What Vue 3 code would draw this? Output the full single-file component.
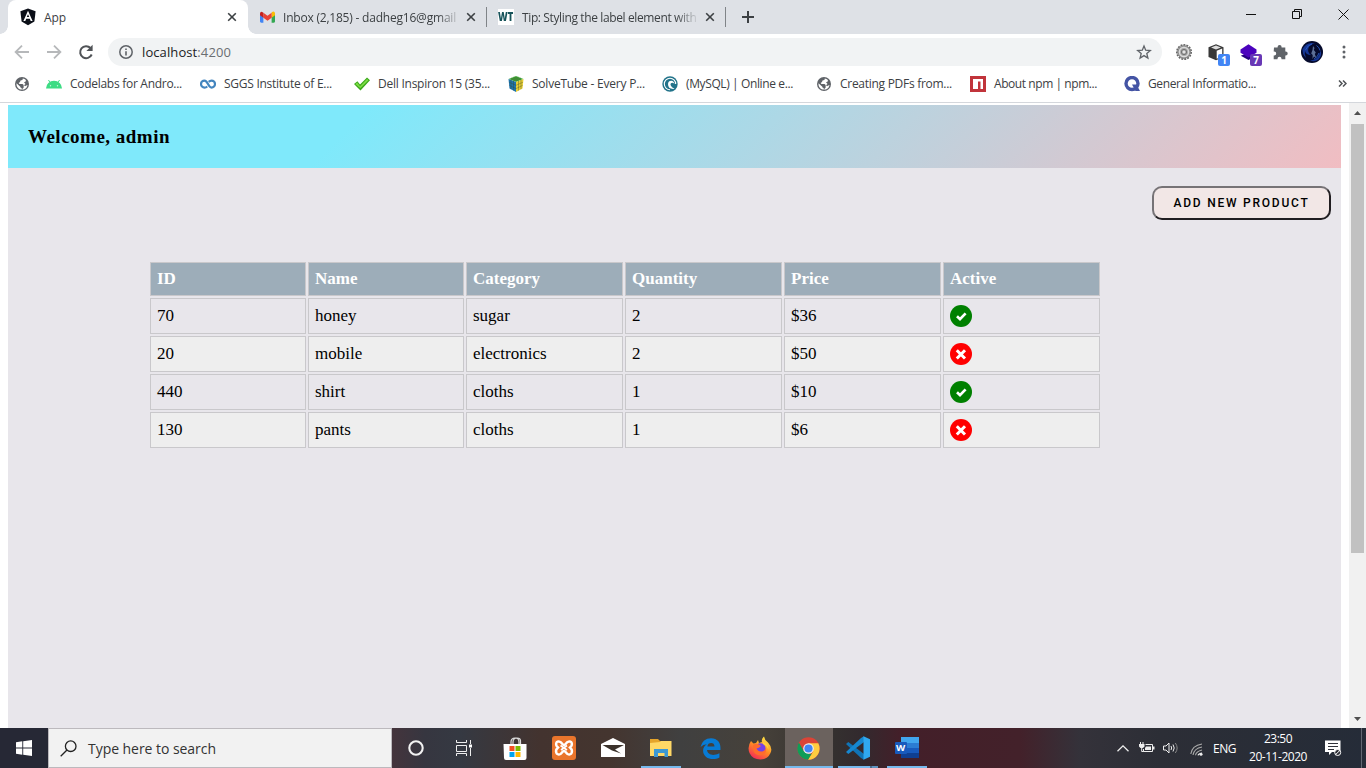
<script setup>
import { nextTick } from 'vue'

// Spreads a label's letters so that it occupies the given width in pixels.
const vFit = {
  mounted(el, { value }) {
    nextTick(() => {
      const natural = el.getBoundingClientRect().width
      el.style.letterSpacing = (value - natural) / el.textContent.length + 'px'
    })
  },
}

const bookmarks = [
  { icon: 'android', label: 'Codelabs for Andro...', width: 112 },
  { icon: 'loop', label: 'SGGS Institute of E...', width: 108 },
  { icon: 'check', label: 'Dell Inspiron 15 (35...', width: 112 },
  { icon: 'cube', label: 'SolveTube - Every P...', width: 113 },
  { icon: 'swirl', label: '(MySQL) | Online e...', width: 107 },
  { icon: 'globe', label: 'Creating PDFs from...', width: 112 },
  { icon: 'npm', label: 'About npm | npm...', width: 103 },
  { icon: 'q', label: 'General Informatio...', width: 108 },
]

const columns = ['ID', 'Name', 'Category', 'Quantity', 'Price', 'Active']
const products = [
  { id: 70, name: 'honey', category: 'sugar', quantity: 2, price: '$36', active: true },
  { id: 20, name: 'mobile', category: 'electronics', quantity: 2, price: '$50', active: false },
  { id: 440, name: 'shirt', category: 'cloths', quantity: 1, price: '$10', active: true },
  { id: 130, name: 'pants', category: 'cloths', quantity: 1, price: '$6', active: false },
]
</script>

<template>
  <div class="screen">
    <div class="tabs">
      <div class="tab active">
        <svg class="fav" viewBox="0 0 16 18" width="16" height="18"><path d="M8 .6 15.6 3.2 14.4 13.6 8 17.2 1.6 13.6 .4 3.2Z" fill="#0b0f18" /><path d="M8 2.8 12.6 13H10.7L9.8 10.7H6.2L5.3 13H3.4ZM8 6.2 6.8 9.1H9.2Z" fill="#fff" fill-rule="evenodd" /></svg>
        <span class="tab-title"><span v-fit="22">App</span></span>
        <svg class="x" viewBox="0 0 10 10" width="10" height="10"><path d="M1.2 1.2 8.8 8.8M8.8 1.2 1.2 8.8" /></svg>
      </div>
      <div class="tab second">
        <svg class="fav" viewBox="0 0 16 12" width="15" height="12"><path d="M0 2v8.8Q0 12 1.2 12h2.4V5Z" fill="#4285f4" /><path d="M16 2v8.8Q16 12 14.8 12h-2.4V5Z" fill="#34a853" /><path d="M12.4 2v4.7L16 4V2Q15.5-1 12.4 1Z" fill="#fbbc04" /><path d="M3.6 1.4 8 4.7l4.4-3.3v5.3L8 10 3.6 6.7Z" fill="#ea4335" /><path d="M0 2Q.5-1 3.6 1.4v5.3L0 4Z" fill="#c5221f" /></svg>
        <span class="tab-title fade"><span v-fit="173">Inbox (2,185) - dadheg16@gmail</span></span>
        <svg class="x" viewBox="0 0 10 10" width="10" height="10"><path d="M1.2 1.2 8.8 8.8M8.8 1.2 1.2 8.8" /></svg>
      </div>
      <div class="tab third">
        <span class="fav wt"><span>WT</span></span>
        <span class="tab-title fade"><span v-fit="174.500">Tip: Styling the label element with</span></span>
        <svg class="x" viewBox="0 0 10 10" width="10" height="10"><path d="M1.2 1.2 8.8 8.8M8.8 1.2 1.2 8.8" /></svg>
      </div>
      <svg class="plus" viewBox="0 0 12 12" width="12" height="12"><path d="M6 0V12M0 6H12" stroke="#3c4043" stroke-width="2" /></svg>
      <div class="window-buttons">
        <svg viewBox="0 0 10 10" width="10" height="10"><path d="M0 5.5H10" /></svg>
        <svg viewBox="0 0 10 10" width="10" height="10"><path d="M.5 2.5h7v7h-7zM2.5 2.5v-2h7v7h-2" /></svg>
        <svg viewBox="0 0 11 11" width="11" height="11"><path d="M.5 .5l10 10M10.500 .5l-10 10" /></svg>
      </div>
    </div>

    <div class="toolbar">
      <svg class="nav" viewBox="0 0 16 16" width="16" height="16"><path d="M15 8H2M8 1.600 1.600 8 8 14.400" stroke="#b6b8ba" /></svg>
      <svg class="nav" viewBox="0 0 16 16" width="16" height="16"><path d="M1 8h13M8 1.600 14.400 8 8 14.400" stroke="#b6b8ba" /></svg>
      <svg class="nav" viewBox="0 0 16 16" width="16" height="16"><path d="M13.700 10.500A6 6 0 1 1 12.500 4" stroke="#505357" stroke-width="2" /><path d="M14.600 .8V7H8.400Z" fill="#505357" /></svg>
      <div class="address">
        <svg viewBox="0 0 14 14" width="14" height="14"><circle cx="7" cy="7" r="6.200" fill="none" stroke="#5f6368" stroke-width="1.500" /><path d="M7 6.200v4.300M7 3.400v1.600" stroke="#5f6368" stroke-width="1.600" /></svg>
        <span class="url" v-fit="89"><b>localhost</b>:4200</span>
        <svg class="star" viewBox="0 0 16 16" width="16" height="16"><path d="M8 1.900 9.700 6.200 14.300 6.500 10.800 9.500 11.900 14 8 11.600 4.100 14 5.200 9.500 1.700 6.500 6.300 6.200Z" fill="none" stroke="#5f6368" stroke-width="1.300" /></svg>
      </div>
      <div class="extensions">
        <svg viewBox="0 0 16 16" width="16" height="16"><circle cx="8" cy="8" r="7.200" fill="none" stroke="#666" stroke-width="1.600" stroke-dasharray="1.900 1.115" /><circle cx="8" cy="8" r="6.300" fill="#aaa" stroke="#6f6f6f" stroke-width=".9" /><circle cx="8" cy="8" r="4.600" fill="none" stroke="#ddd" stroke-width="1.300" /><circle cx="8" cy="8" r="2.600" fill="#b9b9b9" stroke="#707070" /><circle cx="8" cy="8" r="1.100" fill="#eee" /></svg>
        <div class="ext">
          <svg viewBox="0 0 16 17" width="16" height="17"><path d="M8 .3 15.500 3.300V13L8 16.300 .5 13V3.300Z" fill="#383838" /><path d="M8 1.500 13 3.500 8 5.600 3 3.500Z" fill="#ddd" /><path d="M8.700 6.800 14.200 4.600V12.400L8.700 14.800Z" fill="#fff" /></svg>
          <span class="badge blue">1</span>
        </div>
        <div class="ext">
          <svg viewBox="0 0 17 17" width="17" height="17"><path d="M8.500 8.500 16 11.800 8.500 16 .8 11.800Z" fill="#260080" /><path d="M8.500 .2 16.500 5.500v3.200L8.500 13.500.5 8.700V5.500Z" fill="#4b02bd" /></svg>
          <span class="badge purple">7</span>
        </div>
        <svg viewBox="0 0 16 16" width="16" height="16"><path d="M2 3.500h3.600V3a2 2 0 0 1 4 0v.5h3.700v4h.4a2 2 0 0 1 0 4h-.4v3.700H9.500v-.4a2 2 0 0 0-4 0v.4H1.700v-3.800h.5a2 2 0 0 0 0-4h-.5Z" fill="#5f6368" /></svg>
        <svg viewBox="0 0 22 22" width="22" height="22"><circle cx="11" cy="11" r="11" fill="#050a2c" /><path d="M1.500 8Q6 0 14 2.500 9 3 7.500 7T10 14Q5 14 4 10 3 13 5 17 1 13 1.500 8ZM9 19.500q6-.5 8-4 2-3 2.500-6 2 5-2 9-4 3-8.500 1" fill="#153694" /><path d="M4.500 9q2-5 6.500-6M13 18q4-2 5-6M15.500 4.500q3 2 3.500 5" fill="none" stroke="#2b5cc4" stroke-width=".9" /><path d="M12 5l1.500 2-.7 2 2 2.500-1 1.500 1.500 4-2.300-1.500L11.500 18l.2-4-1.500-1.500L11.500 9Z" fill="#5c7096" /></svg>
        <svg viewBox="0 0 4 14" width="4" height="14" fill="#5f6368"><circle cx="2" cy="2" r="1.500" /><circle cx="2" cy="7" r="1.500" /><circle cx="2" cy="12" r="1.500" /></svg>
      </div>
    </div>

    <div class="bookmarks">
      <svg class="apps" viewBox="1 1 14 14" width="14" height="14"><circle cx="8" cy="8" r="7" fill="#5f6368" /><path d="M8.800 2.400Q8.800 4.200 7.400 4.300 6.200 4.300 6.200 5.600 6.200 6.500 4.800 6.700 4.600 7.900 6 7.900H8.500Q9.500 8 9.500 9.300 10.800 9.400 11 10.300 12.500 9 13.600 9.300 12.900 12.500 10 13.400 8.500 13.700 7.700 13.500V12Q6.400 12 6.300 10.700L2.500 7.300Q2.200 11 5 13L7.500 13.700 9.600 11.700 9.700 9.500 11.500 8 10 6.300 11.700 5.600 11.900 3.900Q10.600 2.500 8.800 2.400Z" fill="#fff" fill-rule="evenodd" /></svg>
      <div v-for="mark in bookmarks" :key="mark.label" class="bookmark">
        <svg viewBox="0 0 16 16" width="16" height="16">
          <g v-if="mark.icon === 'android'"><path d="M0 12.500a8 7.700 0 0 1 16 0Z" fill="#3ddc84" /><path d="M4 6.500 2.500 4M12 6.500 13.500 4" stroke="#3ddc84" /><circle cx="4.500" cy="9.800" r=".7" fill="#c9f6dd" /><circle cx="11.500" cy="9.800" r=".7" fill="#c9f6dd" /></g>
          <g v-else-if="mark.icon === 'loop'" fill="none" stroke="#4385be" stroke-width="2.200"><path d="M7.300 10.500Q6 11.600 4.500 11.600a3.500 3.500 0 0 1 0-7C8 4.600 8 11.600 11.500 11.600a3.500 3.500 0 0 0 0-7Q10 4.600 8.700 5.900" /></g>
          <g v-else-if="mark.icon === 'check'"><path d="M0 8 3.400 5.200 6 8.500 13 1.500 16 4.300 6.500 14.500Z" fill="#3aa81a" /><path d="M1.300 8 3.200 6.500 6 10.200 13 3 14.500 4.300 6.400 12.300Z" fill="#7cdc44" /></g>
          <g v-else-if="mark.icon === 'cube'"><path d="M8 0 15.500 3 8 6 .5 3Z" fill="#47b03f" /><path d="M.5 3 8 6V16L1.500 12.400Z" fill="#1f74ad" /><path d="M15.500 3 8 6V16L14.500 12.400Z" fill="#e9cf35" /><path d="M3 4v9.200M5.500 5v9.600M1 6.200 8 9.300M1.200 9.300 8 12.600M10.500 5v9.600M13 4v9.200M15 6.200 8 9.300M14.700 9.300 8 12.600M3 2 10.500 5M5.500 1 13 4M13 2 5.500 5M10.500 1 3 4" stroke="#344622" stroke-width=".35" /></g>
          <g v-else-if="mark.icon === 'swirl'"><circle cx="8" cy="8" r="7.700" fill="#22738a" /><path d="M8 13.700A5.700 5.700 0 1 1 13.700 8" fill="none" stroke="#fff" stroke-width="1.100" /><path d="M12.500 12.800Q6 13.500 6 8 6.300 4.800 9.300 4.800 12 5 12.500 8 10.500 6 8.700 7.500 7.500 10 12.500 12.800Z" fill="#fff" /></g>
          <g v-else-if="mark.icon === 'globe'"><circle cx="8" cy="8" r="7" fill="#5f6368" /><path d="M8.800 2.400Q8.800 4.200 7.400 4.300 6.200 4.300 6.200 5.600 6.200 6.500 4.800 6.700 4.600 7.900 6 7.900H8.500Q9.500 8 9.500 9.300 10.800 9.400 11 10.300 12.500 9 13.600 9.300 12.900 12.500 10 13.400 8.500 13.700 7.700 13.500V12Q6.400 12 6.300 10.700L2.500 7.300Q2.200 11 5 13L7.500 13.700 9.600 11.700 9.700 9.500 11.500 8 10 6.300 11.700 5.600 11.900 3.900Q10.600 2.500 8.800 2.400Z" fill="#fff" fill-rule="evenodd" /></g>
          <g v-else-if="mark.icon === 'npm'"><path d="M0 0h16v16H0Z" fill="#c1343b" /><path d="M3 3h10v10h-2.500V5.500H8V13H3Z" fill="#fff" /></g>
          <g v-else><circle cx="8" cy="7.500" r="6" fill="none" stroke="#4454a4" stroke-width="3.400" /><path d="M8 8.500h4.500L16 15h-4.500Z" fill="#4454a4" /></g>
        </svg>
        <span v-fit="mark.width">{{ mark.label }}</span>
      </div>
      <svg class="more" viewBox="0 0 9 7" width="9" height="7"><path d="M1 .5l3 3-3 3M5 .5l3 3-3 3" fill="none" stroke="#505357" stroke-width="1.500" /></svg>
    </div>

    <div class="viewport">
      <main class="page">
        <header class="welcome"><span v-fit="142">Welcome, admin</span></header>
        <div class="actions"><button class="add"><span v-fit="136">ADD NEW PRODUCT</span></button></div>
        <table class="products">
          <colgroup>
            <col class="narrow"><col class="narrow"><col><col><col><col>
          </colgroup>
          <thead>
            <tr><th v-for="name in columns" :key="name">{{ name }}</th></tr>
          </thead>
          <tbody>
            <tr v-for="item in products" :key="item.id">
              <td>{{ item.id }}</td>
              <td>{{ item.name }}</td>
              <td>{{ item.category }}</td>
              <td>{{ item.quantity }}</td>
              <td>{{ item.price }}</td>
              <td>
                <svg class="status" viewBox="0 0 22 22" width="22" height="22">
                  <circle cx="11" cy="11" r="11" :fill="item.active ? 'green' : 'red'" />
                  <path v-if="item.active" d="M7 11.300 10 14.200 15.600 8.400" fill="none" stroke="#fff" stroke-width="2.700" />
                  <path v-else d="M6.800 7.300 15 15.500M15 7.300 6.800 15.500" fill="none" stroke="#fff" stroke-width="3" />
                </svg>
              </td>
            </tr>
          </tbody>
        </table>
      </main>
      <div class="scrollbar">
        <svg viewBox="0 0 7 4" width="7" height="4"><path d="M0 4 3.500 0 7 4Z" fill="#505050" /></svg>
        <div class="thumb"></div>
        <svg class="down" viewBox="0 0 7 4" width="7" height="4"><path d="M0 0 3.500 4 7 0Z" fill="#505050" /></svg>
      </div>
    </div>

    <div class="taskbar">
      <div class="start">
        <svg viewBox="0 0 16 16" width="16" height="16"><path d="M0 2.200 6.300 1.300V7.500H0ZM7.200 1.200 16 0V7.500H7.200ZM0 8.500H6.300V14.700L0 13.800ZM7.200 8.500H16V16L7.200 14.800Z" fill="#fff" /></svg>
      </div>
      <div class="search">
        <svg viewBox="0 0 17 17" width="17" height="17"><circle cx="10.700" cy="6.200" r="5.300" fill="none" stroke="#222" stroke-width="1.300" /><path d="M7 10 .7 16.300" stroke="#222" stroke-width="1.300" /></svg>
        <span v-fit="128">Type here to search</span>
      </div>
      <div class="apps-row">
        <div class="app"><svg viewBox="0 0 16 16" width="16" height="16"><circle cx="8" cy="8" r="6.700" fill="none" stroke="#f2f2f2" stroke-width="2.100" /></svg></div>
        <div class="app task-view"><svg viewBox="0 0 16 16" width="16" height="16"><path d="M.5 0V2.500H10.500V0M.5 5.500H10.500V11.500H.5ZM.5 16V13.500H10.500V16M14.500 0V4M14.500 8V16" fill="none" stroke="#eee" /><path d="M13 4.500h3v3h-3Z" fill="#fff" /></svg></div>
        <div class="app store"><svg viewBox="0 0 24 24" width="24" height="24"><path d="M8 8V5Q8 1 12 1T16 5V8M10 7V5Q10 1 14 1T17.500 5V7" fill="none" stroke="#ddd" stroke-width="1.200" /><path d="M.5 7H23.500V21Q23.500 23 21.500 23H3Q1 23 1 21Z" fill="#fff" /><path d="M6.500 9h5v5h-5Z" fill="#f25022" /><path d="M12.500 9h5v5h-5Z" fill="#7fba00" /><path d="M6.500 15h5v5h-5Z" fill="#00a4ef" /><path d="M12.500 15h5v5h-5Z" fill="#ffb900" /></svg></div>
        <div class="app shifted"><svg viewBox="0 0 24 24" width="24" height="24"><rect width="24" height="24" rx="3" fill="#e9752c" /><path d="M8.500 6C3.500 4 3 9 6 11.500 2.500 14.500 4 20 8.500 18 10 17 10.500 15 12 15S14 17 15.500 18C20 20 21.500 14.500 18 11.500 21 9 20.500 4 15.500 6 14 7 13.500 9 12 9S10 7 8.500 6Z" fill="none" stroke="#fff" stroke-width="2.400" /><path d="M8.500 9.500 15 14M15 9.500 9 14" stroke="#fff" stroke-width="1.700" /></svg></div>
        <div class="app shifted"><svg viewBox="0 0 24 20" width="24" height="20"><path d="M0 6 12 0 24 6V19H0Z" fill="#fff" /><path d="M1.500 7H23L14 11.500 20 15.500 11 12.500Z" fill="#3b322b" /></svg></div>
        <div class="app open"><svg viewBox="0 0 22 20" width="22" height="20"><path d="M0 1H8L10 3H21V6H0Z" fill="#e5a52b" /><path d="M0 5 10 4 11 3H21.500V18H0Z" fill="#ffd866" /><path d="M4 11H18V19H14.500V15H8V19H4Z" fill="#3c98d3" /></svg></div>
        <div class="app"><svg viewBox="0 0 20 20" width="21" height="21"><path d="M.5 8.500Q2.500 .5 10.500 .3C16.500 .3 19.500 4.500 19.500 9V11.500H6.700C7 15 10.500 16.500 14 16Q16.500 15.700 18.500 14.600V18.500C15 20.500 9 20.500 5.800 18 1.500 14.500 2.300 8.500 6.500 6Q3 6 .5 8.500ZM7 8H13.800Q13.600 4.700 10.700 4.700 7.500 4.700 7 8Z" fill="#087bd5" fill-rule="evenodd" /></svg></div>
        <div class="app"><svg viewBox="0 0 24 24" width="24" height="24"><defs><linearGradient id="fox" x1=".8" y1="0" x2=".2" y2="1"><stop offset="0" stop-color="#fff04a" /><stop offset=".5" stop-color="#ff8a24" /><stop offset="1" stop-color="#f3225b" /></linearGradient></defs><path d="M3 5 5.500 7.500 8 7 10 4 11 7 14 6Q13 3 16 .5 16.500 4 20 6.500 25 12 22.500 17 19.500 23.500 12.500 23.500 4.500 23.500 1.500 17-1 10.500 3 5Z" fill="url(#fox)" /><circle cx="12.500" cy="12.300" r="5" fill="#7542e5" /><path d="M5 9Q8 7 11 8.500L13 10Q11 12 8.500 12.500 10 16 14 15.500 17 15 17.500 12 19.500 18 13 19.300 6 19.500 5 13Z" fill="#ff6c2c" /><path d="M15 6Q21 8 20.500 14 19 9.500 15 8Z" fill="#ffd43a" /></svg></div>
        <div class="app chrome open"><svg viewBox="0 0 24 24" width="23" height="23"><circle cx="12" cy="12" r="11.700" fill="#db4437" /><path d="M12 6.500H22.200A11.700 11.700 0 0 1 11.500 23.700L17 14.800Z" fill="#ffcd40" /><path d="M2 5.800 7 14.500 12 17.500H15.200L11.500 23.700A11.700 11.700 0 0 1 2 5.800Z" fill="#0f9d58" /><circle cx="12" cy="12" r="5.500" fill="#f1f1f1" /><circle cx="12" cy="12" r="4.300" fill="#4285f4" /></svg></div>
        <div class="app open code"><svg viewBox="0 0 24 24" width="24" height="24"><path d="M0 8 2.300 6 18 18V23.800L15 22Z" fill="#1074b6" /><path d="M0 16 2.300 18 18 6V.3L15 2Z" fill="#1687cf" /><path d="M17.500 .2 24 3.200V20.800L17.500 23.800Z" fill="#30a8ef" /></svg></div>
        <div class="app open"><svg viewBox="0 0 24 22" width="24" height="22"><path d="M6 0H24V6H6Z" fill="#41a5ee" /><path d="M6 6H24V11H6Z" fill="#2b7cd3" /><path d="M6 11H24V16H6Z" fill="#185abd" /><path d="M6 16H24V21H6Z" fill="#103f91" /><rect y="5" width="12" height="12" rx="1" fill="#185abd" /><text x="1" y="14.200" font-size="9.500" font-weight="bold" font-family="Open Sans, sans-serif" fill="#fff">W</text></svg></div>
      </div>
      <div class="tray">
        <svg viewBox="0 0 12 7" width="12" height="7"><path d="M.5 6.300 6 .9l5.500 5.400" fill="none" stroke="#eee" stroke-width="1.300" /></svg>
        <svg class="battery" viewBox="0 0 16 12" width="16" height="12"><path d="M6.500 2.500H13.500V9.500H4.500V7" fill="none" stroke="#eee" /><path d="M14 4.500h1.500v3h-1.500ZM7 4.500h5v3.500H6V6ZM0 2h5.500v2.500L4 6H1.500L0 4.500ZM1 0h1v2H1ZM3.500 0h1v2h-1Z" fill="#eee" /><path d="M2.700 5.500v4h2" fill="none" stroke="#eee" /></svg>
        <svg class="volume" viewBox="0 0 16 14" width="16" height="14"><path d="M.5 5H3L6 2V12L3 9H.5Z" fill="none" stroke="#eee" /><path d="M8 5Q9.300 7 8 9M10 3.500Q12.400 7 10 10.500" fill="none" stroke="#eee" /><path d="M12.300 2Q16 7 12.300 12" fill="none" stroke="#888" /></svg>
        <svg class="wifi" viewBox="0 0 13 13" width="13" height="13"><g fill="none" stroke="#aaa" stroke-width="1.100"><path d="M.8 11Q2 2.500 12 1M3 12Q4 5.500 12 4M5.500 12.300Q6 8.500 12 7" /><path d="M8 12.300Q8.500 10.500 12 10" stroke="#eee" /></g><circle cx="11" cy="11.300" r="1.500" fill="#eee" /></svg>
        <span class="lang"><span v-fit="23">ENG</span></span>
        <div class="clock"><span v-fit="28">23:50</span><span v-fit="58">20-11-2020</span></div>
        <svg class="notice" viewBox="0 0 17 17" width="17" height="17"><path d="M0 .5H15.500V12H7L4 15V12H0Z" fill="#fff" /><path d="M3 3.500h10M3 6.500h10M3 9.500h6" stroke="#30323a" stroke-width="1.100" /><circle cx="12.700" cy="12.500" r="3" fill="#2b2d35" stroke="#fff" /><path d="M10.500 14.700 15 10.300" fill="none" stroke="#fff" /></svg>
      </div>
    </div>
  </div>
</template>

<style>
html, body { margin: 0; overflow: hidden; }
</style>

<style scoped>
* { box-sizing: border-box; }
.screen { width: 1366px; height: 768px; display: flex; flex-direction: column; background: #fff; overflow: hidden; font-family: "Open Sans", "Noto Sans", sans-serif; font-size: 12px; font-stretch: 92%; color: #3c4043; }
.screen svg { flex: none; display: block; }
span { white-space: nowrap; }

.tabs { height: 34px; flex: none; background: #dee1e6; display: flex; align-items: center; padding-left: 8px; }
.tab { height: 34px; display: flex; align-items: center; }
.tab.active { width: 240px; background: #fff; border-radius: 8px 8px 0 0; padding: 0 11px 0 12px; position: relative; }
.tab.active::before, .tab.active::after { content: ""; position: absolute; bottom: 0; width: 8px; height: 8px; }
.tab.active::before { left: -8px; background: radial-gradient(circle at 0 0, #dee1e6 7.500px, #fff 8px); }
.tab.active::after { right: -8px; background: radial-gradient(circle at 100% 0, #dee1e6 7.500px, #fff 8px); }
.tab .fav { flex: none; }
.tab-title { flex: 1; min-width: 0; margin-left: 8px; }
.fade { -webkit-mask-image: linear-gradient(90deg, #000 88%, rgba(0, 0, 0, .15)); mask-image: linear-gradient(90deg, #000 88%, rgba(0, 0, 0, .15)); }
.x { fill: none; stroke: #3c4043; stroke-width: 1.600; }
.second { width: 239px; padding: 0 11px 0 12px; }
.second .tab-title { margin-right: 8px; }
.third { width: 239px; padding: 0 11px 0 11px; position: relative; }
.third .tab-title { margin-right: 9px; }
.third::before, .third::after { content: ""; position: absolute; top: 7px; width: 1px; height: 20px; background: #808488; }
.third::before { left: -1px; }
.third::after { right: 0; }
.wt { width: 16px; height: 16px; background: #fff; color: #17535a; font: 800 13px/14px "Open Sans", sans-serif; }
.wt span { display: block; transform: scaleX(.72); transform-origin: 0 50%; }
.plus { margin-left: 16px; }
.window-buttons { margin-left: auto; display: flex; align-items: center; gap: 36px; padding: 0 17px 6px 0; fill: none; stroke: #111; stroke-width: 1; }

.toolbar { height: 36px; flex: none; display: flex; align-items: center; padding-left: 14px; }
.nav { margin-right: 16px; fill: none; stroke-width: 1.800; }
.address { width: 1054px; height: 28px; margin-left: -2px; border-radius: 14px; background: #f1f3f4; display: flex; align-items: center; padding: 0 10px 0 11px; }
.url { margin-left: 9px; font-size: 13px; color: #6a6e72; line-height: 20px; }
.url b { font-weight: 400; color: #202124; }
.star { margin-left: auto; }
.extensions { flex: 1; display: flex; align-items: center; padding-left: 14px; gap: 16px; }
.extensions > svg:nth-of-type(3) { margin-left: -3px; }
.extensions > svg:last-child { margin-left: 3px; }
.ext { width: 16px; height: 17px; position: relative; }
.badge { position: absolute; left: 10px; top: 10px; width: 12px; height: 12px; border-radius: 2px; color: #fff; font: bold 10px/12px "Open Sans", sans-serif; text-align: center; }
.blue { background: #4285f4; }
.purple { background: #6838b5; }

.bookmarks { height: 33px; flex: none; border-bottom: 1px solid #d4d7dc; display: flex; align-items: center; padding: 0 19px 5px 15px; }
.apps { margin-right: 17px; }
.bookmark { width: 154px; flex: none; display: flex; align-items: center; gap: 8px; }
.more { margin-left: auto; }

.viewport { height: 625px; flex: none; display: flex; padding: 2px 0 0 8px; position: relative; }
.page { width: 1333px; background: #e8e6eb; font-family: "Liberation Serif", serif; color: #000; }
.welcome { height: 63px; padding: 21px 20px; background: linear-gradient(135deg, #7fe9fb 26%, #add8e6 56%, #f1bdc2 100%); font-size: 19px; line-height: 21px; font-weight: bold; }
.actions { display: flex; justify-content: flex-end; padding: 18px 10px 0 0; }
.add { width: 179px; height: 34px; padding: 0; border: 2px solid; border-color: #767376 #211e21 #211e21 #767376; border-radius: 10px; background: #f2e7e6; font: 500 12px/20px Roboto, sans-serif; color: #000; }
.products { width: 954px; margin: 40px 0 0 140px; table-layout: fixed; border-collapse: separate; border-spacing: 2px; font-size: 17px; }
.products col { width: 157px; }
.products col.narrow { width: 156px; }
.products th, .products td { padding: 0 6px; border: 1px solid #c9c8cb; text-align: left; line-height: 20px; }
.products th { height: 34px; background: #9dadb9; color: #fff; }
.products td { height: 36px; }
.products tbody tr:nth-child(even) td { background: #eee; }

.scrollbar { width: 17px; margin: -2px 0 0 8px; background: #f1f1f1; display: flex; flex-direction: column; align-items: center; padding: 8px 0 7px; }
.thumb { width: 13px; height: 429px; margin-top: 9px; background: #c1c1c1; }
.down { margin-top: auto; }

.taskbar { height: 40px; flex: none; display: flex; background: linear-gradient(90deg, #262835 0, #262835 48px, #44343c 392px, #363640 425px, #353942 460px, #43332f 540px, #44352f 610px, #404040 680px, #46413a 760px, #34302f 835px, #322a2e 860px, #431f29 900px, #43212a 1020px, #34323a 1080px, #2c2e36 1160px, #252c38 1366px); color: #fff; }
.start { width: 48px; display: flex; align-items: center; justify-content: center; }
.search { width: 344px; border: 1px solid #bcb9bd; background: #f2f2f2; display: flex; align-items: center; gap: 11px; padding-left: 11px; color: #333; font-size: 14px; }
.apps-row { display: flex; }
.app { width: 48px; margin-right: 1.100px; height: 40px; display: flex; align-items: center; justify-content: center; position: relative; }
.task-view { padding-right: 2px; }
.store { padding: 1px 0 0 1px; }
.shifted { padding-left: 2px; }
.open::after { content: ""; position: absolute; left: 4px; right: 4px; bottom: 0; height: 2px; background: #76b9ed; }
.chrome { background: #6b625e; }
.chrome::after { left: 0; right: 0; }
.code::after { background: linear-gradient(90deg, #76b9ed 32px, #4a6f90 32px, #4a6f90 34px, #5f94c0 34px); }
.tray { margin-left: auto; display: flex; align-items: center; position: relative; width: 249px; }
.tray::after { content: ""; position: absolute; right: 4px; top: 0; width: 1px; height: 40px; background: #626873; }
.battery { margin-left: 10px; }
.volume { margin-left: 8px; }
.wifi { margin-left: 11px; margin-top: 3px; }
.lang { margin-left: 10px; width: 24px; }
.clock { width: 60px; margin-left: 11px; display: flex; flex-direction: column; align-items: center; line-height: 18px; }
.notice { margin-left: 17px; }
</style>
